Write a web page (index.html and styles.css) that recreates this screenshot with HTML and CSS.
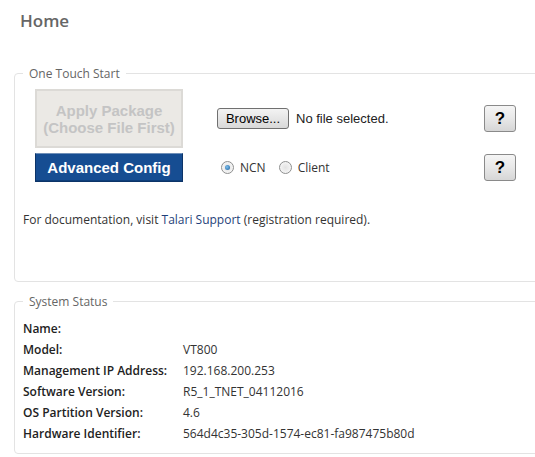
FILE: index.html
```html
<!DOCTYPE html>
<html>
<head>
<meta charset="utf-8">
<link rel="stylesheet" href="styles.css">
</head>
<body>
<div class="page">
  <h1 class="title">Home</h1>
  <fieldset class="box box-start">
    <legend class="legend">One Touch Start</legend>
    <div class="row row-first">
      <button class="btn-apply" disabled>Apply Package<br>(Choose File First)</button>
      <div class="mid">
        <button class="btn-browse">Browse...</button>
        <span class="file-text">No file selected.</span>
      </div>
      <button class="btn-help">?</button>
    </div>
    <div class="row">
      <button class="btn-adv">Advanced Config</button>
      <div class="mid radios">
        <span class="radio radio-on"></span><span class="radio-label">NCN</span>
        <span class="radio"></span><span class="radio-label">Client</span>
      </div>
      <button class="btn-help">?</button>
    </div>
    <p class="doc">For documentation, visit <span class="link">Talari Support</span> (registration required).</p>
  </fieldset>
  <fieldset class="box box-status">
    <legend class="legend">System Status</legend>
    <dl class="status">
      <dt>Name:</dt><dd></dd>
      <dt>Model:</dt><dd>VT800</dd>
      <dt>Management IP Address:</dt><dd>192.168.200.253</dd>
      <dt>Software Version:</dt><dd>R5_1_TNET_04112016</dd>
      <dt>OS Partition Version:</dt><dd>4.6</dd>
      <dt>Hardware Identifier:</dt><dd>564d4c35-305d-1574-ec81-fa987475b80d</dd>
    </dl>
  </fieldset>
</div>
</body>
</html>
```
FILE: styles.css
```css
html, body {
  margin: 0;
  padding: 0;
  overflow: hidden;
  background: #fff;
}
body {
  font-family: "Open Sans", "Liberation Sans", sans-serif;
  font-size: 12px;
  color: #333;
}
.page {
  padding: 9px 0 0 14px;
  width: 560px;
}
.title {
  margin: 0 0 0 6px;
  font-size: 17px;
  font-weight: 600;
  color: #666;
  line-height: 24px;
}
.box {
  margin: 0;
  border: 1px solid #e3e3e3;
  border-radius: 4px;
  padding: 0 0 0 8px;
}
.box-start {
  margin-top: 32px;
  height: 217px;
  box-sizing: border-box;
}
.box-status {
  margin-top: 11px;
  height: 161px;
  box-sizing: border-box;
}
.legend {
  color: #666;
  font-size: 12px;
  padding: 0 6px 0 6px;
  margin-left: 0;
  line-height: 17px;
}
.row {
  display: flex;
  align-items: center;
  margin-left: 12px;
}
.row-first {
  margin-top: 7px;
  margin-bottom: 5px;
}
.btn-apply {
  width: 148px;
  height: 59px;
  margin: 0 34px 0 0;
  padding: 0;
  border: 2px solid #dcdad6;
  background: #ebe9e5;
  color: #c4c4c4;
  font-family: "Liberation Sans", Arial, sans-serif;
  font-weight: bold;
  font-size: 15px;
  line-height: 17px;
}
.btn-adv {
  width: 148px;
  height: 29px;
  margin: 0 34px 0 0;
  padding: 0;
  border: 1px solid #0c3468;
  border-top-color: #6f8fb8;
  background: #164d92;
  color: #fff;
  font-family: "Liberation Sans", Arial, sans-serif;
  font-weight: bold;
  font-size: 15px;
  box-shadow: inset 0 -1px 0 #0f3f7a;
}
.mid {
  width: 267px;
  box-sizing: border-box;
  display: flex;
  align-items: center;
}
.btn-browse {
  width: 72px;
  height: 21px;
  padding: 0;
  border: 1px solid #707070;
  border-radius: 3px;
  background: linear-gradient(#f3f3f3, #e6e6e6 50%, #d8d8d8);
  font-family: "Liberation Sans", Arial, sans-serif;
  font-size: 13px;
  color: #000;
}
.file-text {
  margin-left: 7px;
  font-family: "Liberation Sans", Arial, sans-serif;
  font-size: 13px;
  color: #222;
}
.btn-help {
  width: 32px;
  height: 27px;
  padding: 0;
  border: 1px solid #8a8a8a;
  border-radius: 3px;
  background: linear-gradient(#f5f5f5, #e8e8e8 50%, #d6d6d6);
  font-family: "Liberation Sans", Arial, sans-serif;
  font-weight: bold;
  font-size: 17px;
  color: #000;
}
.radios {
  padding-left: 4px;
}
.radio {
  width: 11px;
  height: 11px;
  border-radius: 50%;
  border: 1px solid #8e8f8f;
  background: radial-gradient(circle, #e2e2e2 0, #f7f7f7 80%);
  box-sizing: content-box;
  display: inline-block;
  position: relative;
}
.radio-on::after {
  content: "";
  position: absolute;
  left: 3px;
  top: 3px;
  width: 5px;
  height: 5px;
  border-radius: 50%;
  background: radial-gradient(circle at 40% 40%, #7ec0ef, #1a5e99);
}
.radio-label {
  margin-left: 6px;
  margin-right: 13px;
  color: #333;
}
.doc {
  margin: 29px 0 0 0;
  line-height: 17px;
}
.link {
  color: #1f3f7a;
}
.status {
  margin: 8px 0 0 0;
  display: grid;
  grid-template-columns: 160px 1fr;
  grid-auto-rows: 21px;
  align-items: center;
}
.status dt {
  font-weight: 600;
  color: #222;
}
.status dd {
  margin: 0;
  color: #333;
}
```
